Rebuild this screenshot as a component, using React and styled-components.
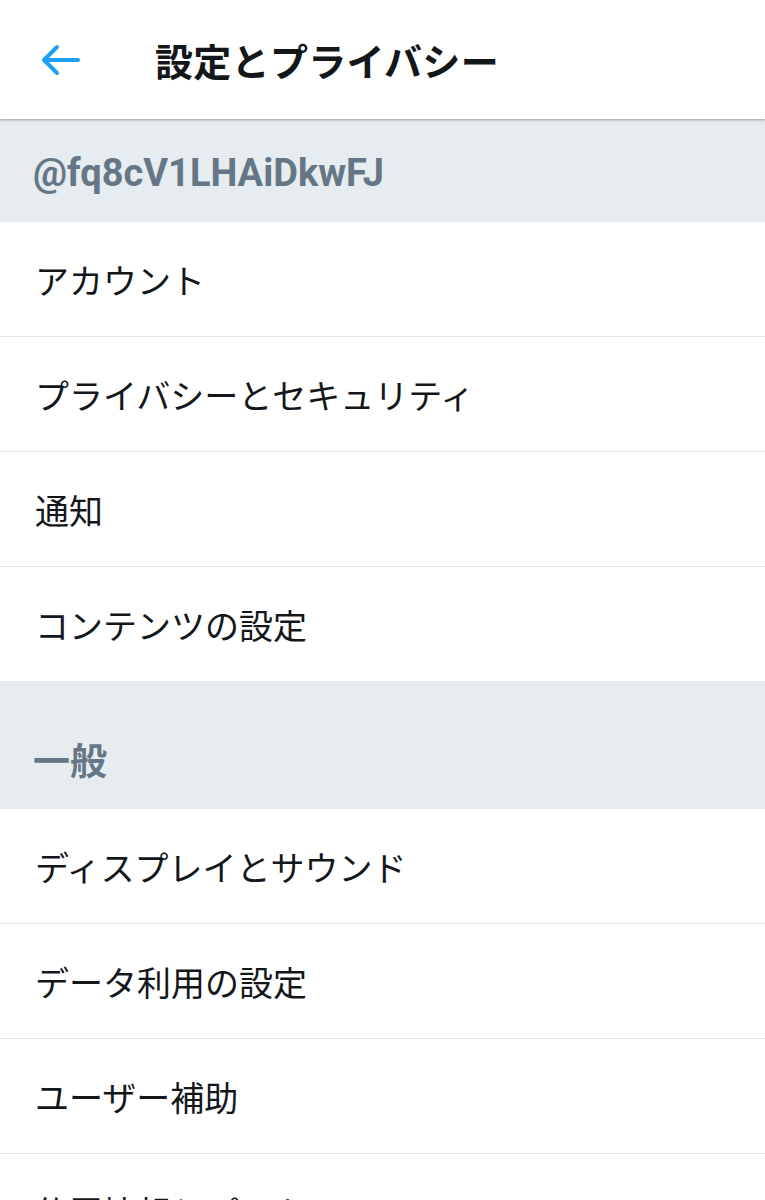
import React from "react";
import styled, { createGlobalStyle } from "styled-components";

const Global = createGlobalStyle`
  html, body { margin: 0; padding: 0; background: #ffffff; }
  body { font-family: "Noto Sans CJK JP", "Noto Sans", sans-serif; }
`;

const Page = styled.div`
  width: 765px;
  height: 1200px;
  overflow: hidden;
  background: #ffffff;
  display: flex;
  flex-direction: column;
`;

const Header = styled.header`
  position: relative;
  z-index: 2;
  height: 119px;
  flex: 0 0 auto;
  display: flex;
  align-items: center;
  background: #ffffff;
  box-shadow: 0 1px 2px rgba(0, 0, 0, 0.25), 0 2px 3px rgba(0, 0, 0, 0.08);
`;

const BackButton = styled.button`
  width: 155px;
  height: 100%;
  border: 0;
  background: transparent;
  padding: 0 0 0 40px;
  display: flex;
  align-items: center;
  cursor: pointer;
`;

const Title = styled.h1`
  margin: 0;
  font-family: "Noto Sans CJK JP", sans-serif;
  font-weight: 700;
  font-size: 38px;
  color: #14171a;
  line-height: 1;
  letter-spacing: 0.3px;
`;

const SectionHeader = styled.div`
  background: #e6ecf0;
  height: ${(p) => p.$h}px;
  box-sizing: border-box;
  padding: ${(p) => p.$pt}px 33px 0;
  display: flex;
  align-items: center;
  font-family: ${(p) => (p.$latin ? '"Roboto", "Noto Sans CJK JP", sans-serif' : '"Noto Sans CJK JP", sans-serif')};
  font-weight: 700;
  font-size: ${(p) => p.$fs}px;
  color: #657786;
  flex: 0 0 auto;
`;

const Row = styled.div`
  height: 114px;
  flex: 0 0 auto;
  display: flex;
  align-items: center;
  padding: 0 35px;
  border-bottom: ${(p) => (p.$last ? "0" : "1px solid #e1e8ed")};
  font-family: "Noto Sans CJK JP", sans-serif;
  font-size: 34px;
  color: #14171a;
  white-space: nowrap;
`;

const BackArrow = () => (
  <svg width="40" height="34" viewBox="0 0 40 34" fill="none">
    <path
      d="M38 17 H4 M17 4 L4 17 L17 30"
      stroke="#1da1f2"
      strokeWidth="4"
      strokeLinecap="round"
      strokeLinejoin="round"
    />
  </svg>
);

const account = ["アカウント", "プライバシーとセキュリティ", "通知", "コンテンツの設定"];
const general = ["ディスプレイとサウンド", "データ利用の設定", "ユーザー補助", "位置情報とプロキシ"];

export default function App() {
  return (
    <Page>
      <Global />
      <Header>
        <BackButton aria-label="戻る">
          <BackArrow />
        </BackButton>
        <Title>設定とプライバシー</Title>
      </Header>
      <SectionHeader $h={103} $pt={4} $fs={38} $latin>@fq8cV1LHAiDkwFJ</SectionHeader>
      {account.map((t, i) => (
        <Row key={t} $last={i === account.length - 1}>{t}</Row>
      ))}
      <SectionHeader $h={128} $pt={28} $fs={37}>一般</SectionHeader>
      {general.map((t) => (
        <Row key={t}>{t}</Row>
      ))}
    </Page>
  );
}
